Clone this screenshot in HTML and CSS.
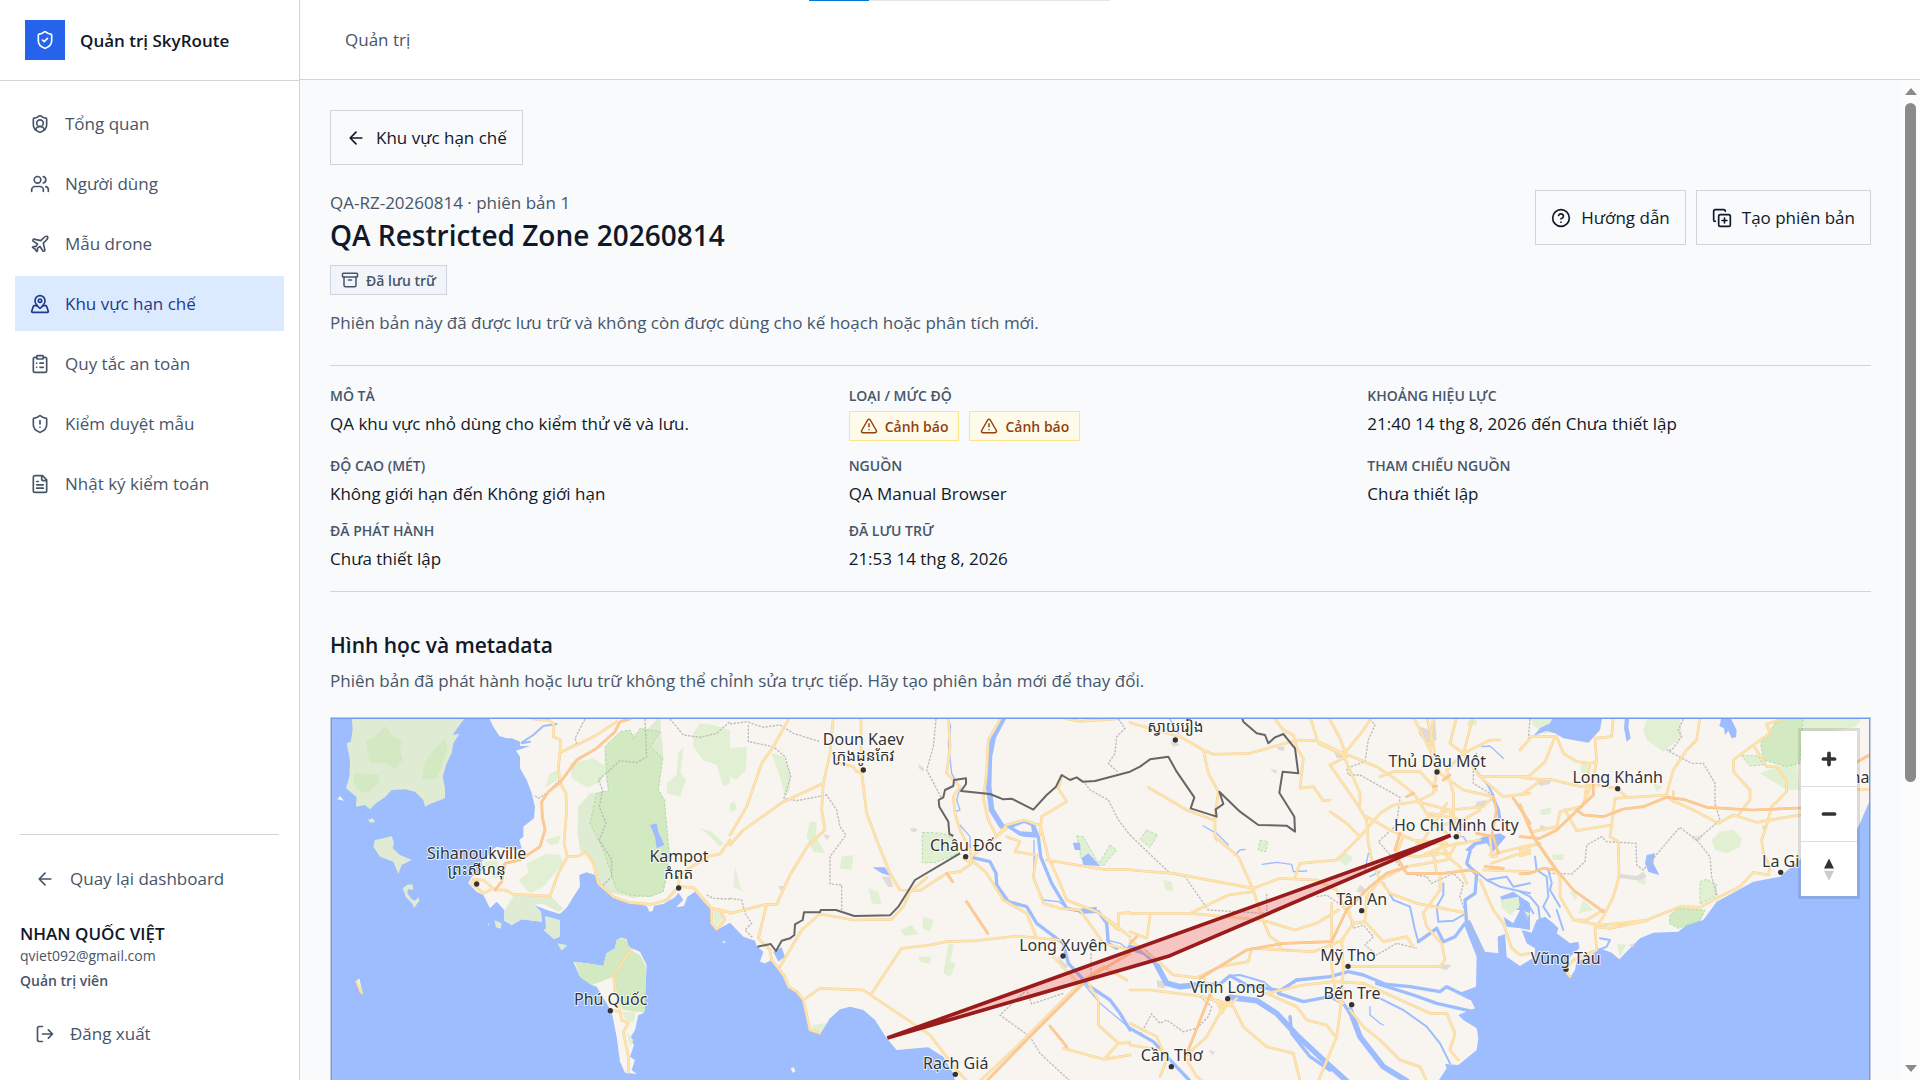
FILE: index.html
```html
<!DOCTYPE html>
<html lang="vi">
<head>
<meta charset="utf-8">
<meta name="viewport" content="width=device-width, initial-scale=1">
<title>Quản trị SkyRoute</title>
<link rel="stylesheet" href="styles.css">
</head>
<body>
<svg class="sprite" aria-hidden="true">
  <symbol id="i-shield" viewBox="0 0 24 24"><path d="M20 13c0 5-3.5 7.5-7.66 8.95a1 1 0 0 1-.67-.01C7.5 20.5 4 18 4 13V6a1 1 0 0 1 1-1c2 0 4.5-1.2 6.24-2.72a1.17 1.17 0 0 1 1.52 0C14.51 3.81 17 5 19 5a1 1 0 0 1 1 1z"/></symbol>
  <symbol id="i-back" viewBox="0 0 24 24"><path d="m12 19-7-7 7-7M19 12H5"/></symbol>
  <symbol id="i-warn" viewBox="0 0 24 24"><path d="m21.73 18-8-14a2 2 0 0 0-3.48 0l-8 14A2 2 0 0 0 4 21h16a2 2 0 0 0 1.73-3M12 9v4M12 17h.01"/></symbol>
</svg>
<div class="app">
  <div class="progress" aria-hidden="true"><div class="progress-fill"></div></div>
  <aside class="sidebar">
    <div class="brand">
      <span class="brand-mark"><svg class="icon" viewBox="0 0 24 24"><use href="#i-shield"/><path d="m9 12 2 2 4-4"/></svg></span>
      <span>Quản trị SkyRoute</span>
    </div>
    <nav class="nav">
      <a class="nav-item" href="#"><svg class="icon" viewBox="0 0 24 24"><use href="#i-shield"/><path d="M6.376 18.91a6 6 0 0 1 11.249.003"/><circle cx="12" cy="11" r="4"/></svg>Tổng quan</a>
      <a class="nav-item" href="#"><svg class="icon" viewBox="0 0 24 24"><path d="M16 21v-2a4 4 0 0 0-4-4H6a4 4 0 0 0-4 4v2M22 21v-2a4 4 0 0 0-3-3.87M16 3.13a4 4 0 0 1 0 7.75"/><circle cx="9" cy="7" r="4"/></svg>Người dùng</a>
      <a class="nav-item" href="#"><svg class="icon" viewBox="0 0 24 24"><path d="M17.8 19.2 16 11l3.5-3.5C21 6 21.5 4 21 3c-1-.5-3 0-4.5 1.5L13 8 4.8 6.2c-.5-.1-.9.1-1.1.5l-.3.5c-.2.5-.1 1 .3 1.3L9 12l-2 3H4l-1 1 3 2 2 3 1-1v-3l3-2 3.5 5.3c.3.4.8.5 1.3.3l.5-.2c.4-.3.6-.7.5-1.2z"/></svg>Mẫu drone</a>
      <a class="nav-item active" href="#" aria-current="page"><svg class="icon" viewBox="0 0 24 24"><path d="M18 8c0 3.613-3.869 7.429-5.393 8.795a1 1 0 0 1-1.214 0C9.87 15.429 6 11.613 6 8a6 6 0 0 1 12 0"/><circle cx="12" cy="8" r="2"/><path d="M8.714 14h-3.71a1 1 0 0 0-.948.683l-2.004 6A1 1 0 0 0 3 22h18a1 1 0 0 0 .948-1.316l-2-6a1 1 0 0 0-.949-.684h-3.712"/></svg>Khu vực hạn chế</a>
      <a class="nav-item" href="#"><svg class="icon" viewBox="0 0 24 24"><rect width="8" height="4" x="8" y="2" rx="1"/><path d="M16 4h2a2 2 0 0 1 2 2v14a2 2 0 0 1-2 2H6a2 2 0 0 1-2-2V6a2 2 0 0 1 2-2h2M12 11h4M12 16h4M8 11h.01M8 16h.01"/></svg>Quy tắc an toàn</a>
      <a class="nav-item" href="#"><svg class="icon" viewBox="0 0 24 24"><use href="#i-shield"/><path d="M12 8v4M12 16h.01"/></svg>Kiểm duyệt mẫu</a>
      <a class="nav-item" href="#"><svg class="icon" viewBox="0 0 24 24"><path d="M15 2H6a2 2 0 0 0-2 2v16a2 2 0 0 0 2 2h12a2 2 0 0 0 2-2V7ZM14 2v4a2 2 0 0 0 2 2h4M10 9H8M16 13H8M16 17H8"/></svg>Nhật ký kiểm toán</a>
    </nav>
    <div class="account">
      <a class="account-action" href="#"><svg class="icon"><use href="#i-back"/></svg>Quay lại dashboard</a>
      <div class="user">
        <div class="user-name">NHAN QUỐC VIỆT</div>
        <div class="user-mail">qviet092@gmail.com</div>
        <div class="user-role">Quản trị viên</div>
      </div>
      <button class="account-action" type="button"><svg class="icon" viewBox="0 0 24 24"><path d="M9 21H5a2 2 0 0 1-2-2V5a2 2 0 0 1 2-2h4M16 17l5-5-5-5M21 12H9"/></svg>Đăng xuất</button>
    </div>
  </aside>

  <div class="workspace">
    <header class="topbar">Quản trị</header>
    <div class="scroller">
      <main class="content">
        <a class="btn" href="#"><svg class="icon"><use href="#i-back"/></svg>Khu vực hạn chế</a>
        <div class="page-head">
          <div>
            <p class="muted">QA-RZ-20260814 · phiên bản 1</p>
            <h1>QA Restricted Zone 20260814</h1>
            <span class="badge"><svg class="icon" viewBox="0 0 24 24"><rect width="20" height="5" x="2" y="3" rx="1"/><path d="M4 8v11a2 2 0 0 0 2 2h12a2 2 0 0 0 2-2V8M10 12h4"/></svg>Đã lưu trữ</span>
            <p class="muted note">Phiên bản này đã được lưu trữ và không còn được dùng cho kế hoạch hoặc phân tích mới.</p>
          </div>
          <div class="actions">
            <button class="btn" type="button"><svg class="icon" viewBox="0 0 24 24"><circle cx="12" cy="12" r="10"/><path d="M9.09 9a3 3 0 0 1 5.83 1c0 2-3 3-3 3M12 17h.01"/></svg>Hướng dẫn</button>
            <button class="btn" type="button"><svg class="icon" viewBox="0 0 24 24"><path d="M15 12v6M12 15h6"/><rect width="14" height="14" x="8" y="8" rx="2"/><path d="M4 16c-1.1 0-2-.9-2-2V4c0-1.1.9-2 2-2h10c1.1 0 2 .9 2 2"/></svg>Tạo phiên bản</button>
          </div>
        </div>

        <dl class="details">
          <div><dt>MÔ TẢ</dt><dd>QA khu vực nhỏ dùng cho kiểm thử vẽ và lưu.</dd></div>
          <div><dt>LOẠI / MỨC ĐỘ</dt><dd class="badges"><span class="badge warn"><svg class="icon"><use href="#i-warn"/></svg>Cảnh báo</span><span class="badge warn"><svg class="icon"><use href="#i-warn"/></svg>Cảnh báo</span></dd></div>
          <div><dt>KHOẢNG HIỆU LỰC</dt><dd>21:40 14 thg 8, 2026 đến Chưa thiết lập</dd></div>
          <div><dt>ĐỘ CAO (MÉT)</dt><dd>Không giới hạn đến Không giới hạn</dd></div>
          <div><dt>NGUỒN</dt><dd>QA Manual Browser</dd></div>
          <div><dt>THAM CHIẾU NGUỒN</dt><dd>Chưa thiết lập</dd></div>
          <div><dt>ĐÃ PHÁT HÀNH</dt><dd>Chưa thiết lập</dd></div>
          <div><dt>ĐÃ LƯU TRỮ</dt><dd>21:53 14 thg 8, 2026</dd></div>
        </dl>

        <section class="geometry">
          <h2>Hình học và metadata</h2>
          <p class="muted">Phiên bản đã phát hành hoặc lưu trữ không thể chỉnh sửa trực tiếp. Hãy tạo phiên bản mới để thay đổi.</p>
          <div class="map">
            <svg class="map-canvas" viewBox="3 24 4617 1800" preserveAspectRatio="xMidYMin slice" role="img" aria-label="Bản đồ khu vực hạn chế">
              <defs>
                <g id="roads">
                  <path d="M610 27 660 32 672 45 670 80 692 90 690 125 685 170 690 218 708 250 710 300 702 400 712 440 685 490 660 558 550 553 525 540 495 540 460 510 430 508 425 520 460 550 480 540M712 440 745 438 768 425 790 460 805 520 850 560 900 578 965 583 1010 570 1045 530 1090 532 1145 595 1200 607M1145 595 1145 640 1160 658 1185 630 1170 598M1200 390 1170 432 1140 438 1050 490 1045 530M695 125 750 100 800 75 860 35M905 720 885 745 850 800 860 850 875 930 895 940 880 965 895 1040 895 1088M840 900 870 905M80 815 95 848"/>
                  <g transform="translate(1200)">
                    <path d="M180 20 130 110 95 160 50 290 0 375M310 20 300 130 280 220 275 300 285 360 235 405 180 495 140 583 110 583 0 610M280 220 160 275 40 360 0 405M393 20 393 170 410 310 440 390 480 490 510 540 570 542 650 490 690 485 725 460 700 445M330 160 370 170 380 185 393 187M110 583 85 685 120 720 125 750 165 800 175 830 200 845 220 870 240 960 270 970M220 870 270 835 400 840 600 975 680 1080 710 1113M150 770 215 660 270 612 370 630 485 628 520 590 540 545 590 503M425 850 515 715 600 705 650 695 740 692 860 678 990 690M655 20 660 110 650 190 690 230 670 260 675 310 690 360 720 420 725 450 770 490 820 570 890 610 920 685M815 20 775 90 770 190 760 265 775 330 800 380 830 345 885 330 915 342 930 345 955 440 990 520 1010 570 1100 605 1150 640 1200 680M725 440 830 355M1010 275 935 320 930 375M995 200 985 235 1010 275M950 450 1120 478 1200 478M830 380 870 395 855 425 920 435 910 500 940 580 990 595 1050 600 1120 700 1200 720M970 740 1040 815M1075 820 1105 870 1105 945 1165 1000 1125 1045M1000 1015 1120 1048 1200 1035M750 1113 860 1010 1060 810 1120 770 1190 810M1165 610 1165 660 1120 620M1165 610 1200 608M1165 1000 1200 998M1010 27 1050 34 1160 27"/>
                  </g>
                  <g transform="translate(2400)">
                    <path d="M0 38 150 80 220 120 250 133 360 130 500 90 560 92 640 130 740 170 800 210 850 250 890 310 950 370M220 120 235 190 265 245 255 320 255 380 325 440 370 540 395 620 420 680 450 700 450 720M55 232 170 300 250 330M430 20 460 60 490 75 500 115 520 145 510 235 550 230 580 272 600 270M540 20 565 100 640 135 700 60 720 30M600 30 630 85 650 140 600 165 680 280 710 330 715 400 725 450 750 510M640 135 690 250 690 285M600 305 650 340 690 380 750 310 790 285 860 275 910 250 920 180 910 100 890 20M690 380 620 450 510 460 495 500M0 480 130 490 370 535 450 505 560 510 620 540 640 590 660 610M0 610 180 610 295 555 370 545M180 610 395 630 495 660 560 640 625 600M650 600 670 640 705 635 710 560 750 510 830 470 950 450 980 400M670 640 635 690 640 770 635 870 620 980 565 1113M605 580 605 770 620 870 640 880M705 635 760 695 830 680 850 710M750 510 780 550 860 580 1000 607M0 665 50 685 60 620M0 690 90 760 130 795 200 803 270 770 355 755 365 715 550 725 640 690M0 840 60 840 220 860 310 890 340 950 410 1010 490 1030 510 1113M220 800 250 870 280 890 230 980 165 1040 200 1100 220 1113M0 940 80 980 110 1050 90 1100M0 1005 90 1020M300 870 275 910 260 870 300 885 320 865M410 850 500 890 530 930 590 945 620 985M410 850 520 825 610 815 700 820 900 910 950 910 975 970 960 1020 985 1050M660 770 750 770 930 770 945 750 935 700 890 650 880 610 930 540 930 500M660 900 700 950 750 990 810 1050 870 1070 890 1113M710 320 780 360 850 390 950 400M750 200 790 185 870 185 920 240M980 20 960 100 1000 130 1050 200 1120 260 1200 250M1050 200 1200 200M1030 20 1000 130 950 180 970 250 970 320 990 380M1000 130 1080 90 1110 90M910 20 900 120 930 190 1000 240 1090 260M850 20 880 80 905 130M860 275 960 300 1060 290 1090 260M880 330 960 300 970 350M860 420 920 330 950 280M870 440 940 410 1050 390M920 490 910 430 950 400M800 430 860 440 940 430 990 470 1010 520M820 380 800 430 860 440M860 400 930 400 960 440M900 310 1000 330 1050 300M910 350 960 340 1010 350M1050 510 1090 600 1120 640 1145 715 1170 735 1200 730M1060 480 1200 485M1080 435 1200 405M1085 460 1200 420M1080 380 1085 440 1100 440"/>
                  </g>
                  <g transform="translate(3570)">
                    <path d="M0 120 35 80 110 80 130 130 170 155 210 160 230 155 225 85 275 80 280 20M105 80 75 155 20 205 0 200M20 205 100 210 180 230 215 225 230 155M0 255 60 215M215 225 185 290 120 305 110 350 40 365M135 300 170 362 275 345 285 265 440 255 455 270 530 305 595 340 640 315 710 337 840 315M230 225 290 235 320 260M440 250 460 180 500 120 530 90 540 20M275 345 270 380 295 395 297 500 280 560 250 620 225 655 230 720 160 750 135 780 150 800M460 245 460 275M780 30 740 42 750 70 700 105 640 150 640 185 690 240 690 270 655 315M700 105 740 170 770 170 800 210 800 245 755 290 740 345 725 390 730 430 750 470 745 495 700 487 660 530 600 560 540 592 480 590 380 630 300 640 240 645 160 630 120 560 120 500 40 380 0 285M160 630 200 630 250 600M225 650 270 655 380 632M0 420 40 405 60 400M0 438 30 430M1013 238 1048 238M210 160 195 260"/>
                  </g>
                </g>
                <g id="trunks">
                  <path d="M900 27 870 35 855 65 800 115 740 150 690 218 655 245 635 275 637 320 645 360 630 410 570 450 525 460 515 515 495 540"/>
                  <path transform="translate(1200)" d="M650 490 668 515M710 575 773 670M960 948 1010 1010M770 1113 900 980 1080 800 1200 730"/>
                  <path transform="translate(2400)" d="M0 700 20 680M210 805 350 720 460 700 605 695 650 600 720 530 770 490 830 470M175 1020 240 855M795 420 810 370M800 440 830 490 940 490 1020 480 1045 490M1040 370 1090 380 1105 430M1090 260 1100 300 1085 380M1150 265 1200 340M830 260 850 250M910 230 920 228M940 210 960 195M1065 470 1120 475"/>
                  <path transform="translate(3570)" d="M0 380 60 385 110 360 220 255 220 225M170 300 190 315 250 320 310 297 370 290 440 262 490 268 560 292 700 300 840 294M1013 155 1048 135M0 285 40 380 110 480 160 540 250 605M0 492 30 490 70 475 110 480"/>
                </g>
              </defs>
              <rect class="water" x="-3000" y="0" width="11000" height="2000"/>
              <path class="forest" d="M65 20 68 60 62 95 50 100 60 150 58 200 48 235 80 262 78 290 105 285 120 298 140 278 165 262 185 240 225 238 255 245 280 270 285 290 300 282 345 265 345 235 338 200 350 160 365 130 370 100 388 72 368 74 385 50 408 20Z"/>
              <path class="wood" d="M165 48 188 78 215 92 210 120 218 150 195 175 165 160 120 160 108 95 140 75ZM345 85 352 110 335 170 320 205 275 210 285 155 315 115ZM75 190 150 195 145 220 110 250 85 240 70 215Z"/>
              <path class="land" d="M475 20 490 50 508 78 530 85 545 85 570 95 570 108 600 108 558 122 570 140 570 175 590 210 605 250 615 290 612 325 580 350 580 380 568 390 575 415 560 420 500 410 490 418 455 455 460 480 425 500 415 520 440 545 460 555 480 595 500 575 523 600 523 632 545 645 575 628 635 635 633 605 612 585 650 600 690 612 712 590 730 560 750 530 748 495 770 487 795 495 805 525 830 545 870 572 950 588 958 605 968 603 972 587 1000 582 1035 562 1045 548 1060 570 1038 592 1062 588 1072 560 1095 545 1125 580 1145 600 1145 640 1160 660 1200 638 1240 680 1275 692 1280 708 1300 725 1290 755 1305 760 1325 750 1350 780 1370 825 1400 845 1420 870 1430 920 1440 955 1470 972 1500 925 1530 898 1560 890 1600 900 1635 930 1670 985 1700 1020 1795 1012 1840 1040 1870 1090 1880 1140 1880 1900 3325 1900 3325 1113 3350 1075 3345 1062 3385 1065 3410 1045 3440 1020 3445 985 3440 955 3400 930 3385 915 3435 895 3420 865 3385 850 3438 830 3440 740 3400 640 3420 630 3465 725 3505 730 3503 680 3525 672 3530 740 3570 768 3615 740 3615 715 3590 700 3575 660 3605 668 3620 630 3645 620 3670 640 3685 655 3680 670 3720 700 3745 695 3748 715 3720 740 3705 780 3720 803 3735 780 3740 755 3785 735 3810 715 3845 728 3868 748 3900 715 3930 685 3970 668 4045 665 4070 645 4120 630 4160 575 4210 548 4270 515 4350 500 4362 490 4420 440 4520 420 4583 355 4618 275 4640 20Z"/>
              <path class="land" d="M860 690 875 683 890 688 895 710 930 725 950 765 945 860 940 910 925 915 915 960 900 985 912 1005 900 1040 915 1050 905 1080 920 1092 885 1088 870 1055 860 980 845 905 800 830 785 825 750 800 730 755 770 760 820 768 830 730 855 715ZM22 268 30 258 42 272ZM78 815 88 805 98 850 90 848ZM1175 696 1186 692 1184 700ZM1382 1075 1392 1072 1396 1085 1388 1088Z"/>
              <path class="forest" d="M135 390 160 385 185 378 192 398 188 415 210 435 245 450 215 465 205 492 190 455 150 440 130 410ZM218 535 232 524 248 523 250 540 234 538 232 550 245 568 255 572 266 562 268 572 252 594 246 580 228 562ZM114 330 128 325 136 335 122 339ZM493 630 515 640 512 656 498 652ZM645 618 690 630 690 680 672 688 640 660 648 655ZM682 700 712 706 695 722ZM472 640 478 642 476 648ZM550 558 665 560 700 597 685 605 640 582 612 583 633 605 635 635 575 628 545 645 523 632 525 600ZM780 250 835 242 822 180 825 120 850 90 950 60 990 20 1000 140 985 240 1005 270 1020 480 1000 545 915 565 830 545 805 520 785 450 750 420 742 370 745 290Z"/>
              <path class="wood park" d="M825 110 870 65 900 60 912 88 930 55 990 65 962 110 998 145 985 240 1003 270 1018 430 1000 545 960 560 900 555 860 540 820 420 780 340 800 250 835 242 830 180Z"/>
              <path class="wood" d="M860 690 885 685 905 722 930 735 948 770 945 905 920 905 880 900 850 850 850 800 800 820 785 825 750 800 735 757 770 760 820 768 830 730 855 715Z"/>
              <path class="leaf" d="M720 160 790 145 828 170 815 215 770 232 725 205ZM660 190 690 178 680 210 645 235ZM590 460 650 432 690 435 700 460 640 530 600 550 565 510 595 490ZM460 455 500 450 510 500 490 505ZM645 390 692 375 685 400 660 405ZM1060 110 1052 190 1068 210 1050 260 1012 250 1010 220 1040 195 1045 130ZM1090 70 1110 40 1150 45 1200 60 1200 220 1180 230 1160 165 1120 150 1090 110ZM1110 355 1145 365 1180 400 1170 410 1130 370ZM875 905 918 905 912 935 890 935ZM890 965 910 990 900 1010ZM1165 598 1180 610 1172 635 1152 652 1150 605Z"/>
              <g transform="translate(1200)">
                <path class="leaf" d="M0 115 50 110 48 180 20 210 0 200ZM125 130 160 140 182 190 180 240 165 260 150 200ZM240 335 260 335 258 380 285 430 250 425 230 380ZM335 440 370 435 365 480 330 475ZM415 535 445 545 455 585 425 580ZM580 622 612 630 598 665 578 655ZM510 660 545 645 565 672 525 678ZM655 700 672 705 660 755 678 760 660 800 640 790ZM565 740 605 740 600 762 570 755ZM0 280 15 275 20 300 0 305ZM245 945 292 938 270 965 250 960ZM15 470 30 530 40 545 10 530Z"/>
                <path class="leaf park" d="M577 367 640 370 670 385 690 428 615 458 577 458ZM1040 378 1060 380 1110 468 1055 450ZM1140 405 1160 420 1120 468 1108 458Z"/>
                <path class="water" d="M1028 398 1050 398 1052 420 1035 420ZM1055 445 1075 430 1110 468 1060 465ZM428 472 465 472 480 497 455 490ZM130 725 155 712 165 740 145 755ZM1040 598 1100 590 1100 608 1050 612ZM820 345 870 330 912 342 925 380 870 378Z"/>
                <path class="land" d="M850 352 882 339 903 347 906 366 870 364Z"/>
                <path class="urban" d="M565 162 582 175 580 185 567 175ZM540 355 562 355 558 365 545 365ZM455 500 480 500 490 530 475 532ZM145 528 165 528 152 542ZM980 735 1015 770 1000 778ZM280 372 300 378 290 390Z"/>
              </g>
              <g transform="translate(2400)">
                <path class="leaf park" d="M50 360 83 375 60 412 30 388ZM390 390 413 395 408 425 384 420Z"/>
                <path class="leaf" d="M648 428 670 445 648 468 622 448ZM100 510 125 515 130 545 105 538ZM1015 30 1040 30 1040 45 1010 48Z"/>
                <path class="urban" d="M870 50 900 60 915 27 920 90 890 100 865 70ZM612 125 640 122 650 140 620 145ZM1040 275 1070 270 1065 290 1035 290ZM690 525 705 535 700 550 680 545ZM930 762 965 765 950 780 930 775ZM80 810 105 815 105 835 82 832ZM440 110 465 110 460 122 445 120ZM120 95 140 100 150 105 130 110ZM235 1020 255 1025 248 1036ZM420 178 440 180 438 192ZM250 380 265 385 260 398Z"/>
                <path class="water" d="M1060 380 1110 370 1128 380 1090 425 1070 400 1040 405 1020 425 1005 420 1040 390ZM1110 560 1150 545 1200 580 1200 660 1170 655 1130 650 1120 620 1150 640 1170 600 1130 600Z"/>
                <path class="leaf" d="M1112 570 1165 560 1170 590 1140 615 1115 595ZM1175 600 1200 610 1190 630Z"/>
              </g>
              <g transform="translate(3570)">
                <path class="leaf" d="M30 20 130 20 128 65 70 70 40 45ZM370 60 385 20 480 20 485 80 430 125 380 90ZM575 390 600 365 640 360 665 385 660 410 620 430 585 420ZM175 610 190 570 220 600ZM60 300 95 292 90 312 65 315ZM95 435 130 432 130 450 100 450ZM150 545 175 550 165 572ZM515 378 548 375 545 390 520 392ZM400 220 428 230 410 245ZM180 165 200 160 205 185 185 190ZM290 700 318 705 300 740ZM850 20 1030 20 1008 50 850 80ZM720 190 770 170 830 165 840 240 800 240ZM350 515 380 505 375 525Z"/>
                <path class="wood park" d="M780 20 850 20 840 160 800 170 730 150 722 100ZM475 595 555 600 540 632 475 655 448 640 450 615Z"/>
                <path class="leaf park" d="M665 137 715 137 730 165 690 168ZM540 515 560 508 590 525 585 560 540 582Z"/>
                <path class="urban" d="M50 210 95 203 90 222 60 228ZM300 492 350 498 370 485 380 500 360 512 290 502ZM725 345 740 350 732 365ZM60 345 80 350 60 358ZM325 705 345 700 340 712Z"/>
                <path class="water" d="M100 20 247 20 240 60 205 98 130 85 105 70 80 62 40 78 60 55 90 40ZM315 20 328 20 325 50 332 85 320 95 312 55ZM605 20 630 20 650 60 648 82 635 85 625 62 615 75 612 55 598 48Z"/>
                <path class="water" d="M380 435 405 430 400 460 418 495 398 490 385 485 375 460Z"/>
              </g>
              <path class="water" d="M960 345 980 340 985 365 1003 405 980 415 975 380Z"/>
              <path class="river w6" d="M575 98 610 75 640 48 680 42M575 100 600 95"/>
              <g class="river" transform="translate(1200)">
                <path class="w18" d="M822 20 790 80 778 140 776 230 785 300 815 348"/>
                <path class="w10" d="M912 350 925 380 932 440 965 520 1010 595 1060 605 1105 605 1130 640 1135 700 1160 715M725 442 780 455 798 490 800 525 835 575 890 590 920 640 1000 700 1015 760 1080 830"/>
                <path class="w10" d="M1080 830 1140 870 1170 910 1200 960M880 375 920 378"/>
                <path class="w4" d="M655 27 662 50 655 100 665 190 690 235 680 270 690 300 675 305M690 345 720 380 722 440M912 390 912 510 940 570 985 575 1010 590M1060 820 1110 880 1200 955M1130 690 1170 700 1190 715"/>
              </g>
              <g class="river" transform="translate(2400)">
                <path class="w18" d="M300 862 380 872 440 910 500 975 580 1050 650 1113M0 712 45 728 75 755 110 820 150 830 200 825M660 900 690 980 760 1070 830 1113"/>
                <path class="w10" d="M740 820 850 855 920 880 1030 905M500 810 600 800 655 785 700 795 760 820"/>
                <path class="w10" d="M200 825 270 822 300 797 350 825 450 842 500 810M445 850 520 875 600 860 640 880 660 910M480 920 485 970 540 1040 600 1080M0 955 70 995 130 1060 180 1113M740 820 840 830 930 845 950 830 1020 865M1085 255 1105 300 1110 330M1005 640 975 680 940 695 920 655 900 670 865 695M1020 425 1010 460 1040 495 1035 550 1005 570 1010 645"/>
                <path class="w6" d="M1020 470 1070 510 1130 500M865 695 855 660 840 590 790 570 760 520M940 520 940 555 920 590 925 635 970 632 1000 615M300 797 330 795 400 815 430 840M750 865 820 900 890 950 930 1000 960 1060M1040 185 1070 220 1090 255M1130 500 1150 530 1200 520M1070 510 1110 530 1200 550"/>
                <path class="w4" d="M720 890 720 915 750 940 760 945M220 348 260 370 295 405M315 435 330 420 345 418M397 463 440 457 485 463 490 485 530 483M705 480 715 430M720 500 750 485M970 380 1000 380 1010 395M1055 110 1080 108 1120 145M1040 130 1030 160 1045 190M120 27 135 60 145 70"/>
              </g>
              <g class="river w6" transform="translate(3570)">
                <path d="M0 545 30 560 55 590 60 630M45 440 50 480 80 500 85 560 70 590 90 620M85 480 95 520 90 540 120 590M110 600 130 660M240 685 270 690 260 710 235 720M0 590 20 620 10 650M20 575 40 610"/>
              </g>
              <path class="region" d="M765 27 735 85 740 100 690 130 685 215 650 250 625 265 612 255M945 27 950 140 920 158 870 152 805 210 818 240 808 290 828 340 808 390 845 450 845 500 815 530M1020 27 1060 75 1110 82 1160 70 1200 35M1130 555 1150 565 1200 567"/>
              <path class="region" transform="translate(1200)" d="M0 42 50 35 100 52 150 45 190 70 270 95M55 45 55 95 130 110 165 140 182 200 162 265 200 272 290 255 320 300 330 350 348 375 300 440 300 522 335 525 335 600M0 565 35 570 45 610 65 640 45 660 70 685M618 27 610 110 590 180 635 265M1165 27 1185 55 1160 80 1155 130 1135 160 1162 185M1065 220 1080 240 1135 270 1165 330 1200 375M1000 850 905 882 890 840 810 915 900 980 930 1030 1020 1113M1083 730 1083 790"/>
              <path class="region" transform="translate(2400)" d="M0 375 120 490 165 500 235 600 410 610 410 550M720 27 735 45 715 90 705 155 650 175 655 195 690 195 810 262 800 345 745 395 830 490 890 500 905 520 970 490 1000 520 990 560 1020 650 1060 735M560 560 590 555 640 590 660 620 670 655 700 645 730 680 705 705 740 735 800 700 860 715M210 860 245 890 235 920 200 955 160 965 110 930 90 940 65 912 30 975M1030 160 1030 220 1080 250"/>
              <path class="region" transform="translate(3570)" d="M30 27 25 90 0 120M490 27 475 60 485 80 455 120 440 120 515 160 550 160 585 220 585 280 600 330 530 390 480 352 455 380 370 480 350 465 348 400 260 395 245 380 200 405 195 455 155 492 90 490M530 390 570 440 575 500 595 570"/>
              <use class="road-case" href="#roads"/>
              <use class="road-fill" href="#roads"/>
              <use class="trunk-case" href="#trunks"/>
              <use class="trunk-fill" href="#trunks"/>
              <path class="border" d="M1282 710 1322 702 1338 723 1355 692 1380 685 1393 675 1395 643 1418 630 1422 607 1470 607 1472 600 1518 600 1573 618 1680 616 1705 590 1755 510 1890 430M1870 378 1858 372 1855 335 1828 290 1826 270 1840 262 1845 240 1870 228 1872 210 1908 205 1908 222 1893 243 1980 252 2020 268 2045 266 2110 299 2150 255 2178 230 2195 195 2220 210 2240 202 2258 215 2295 213 2400 185 2430 170 2460 148 2515 140 2540 185 2593 262 2582 295 2660 320 2657 298 2680 282 2668 245 2730 305 2785 345 2870 347 2895 365 2893 320 2848 248 2858 185 2905 190 2895 115 2860 72 2835 82 2815 100 2805 75 2780 70 2740 35 2735 20"/>
              <path class="zone" d="M1672 984 3362 376 2520 737Z"/>
              <g class="dots">
                <circle cx="440" cy="522" r="8"/><circle cx="1046" cy="534" r="8"/><circle cx="841" cy="902" r="8"/><circle cx="1600" cy="180" r="8"/><circle cx="1907" cy="440" r="8"/><circle cx="2199" cy="738" r="8"/><circle cx="1876" cy="1093" r="8"/><circle cx="2536" cy="90" r="8"/><circle cx="3321" cy="186" r="8"/><circle cx="3379" cy="380" r="8"/><circle cx="3095" cy="602" r="8"/><circle cx="3054" cy="769" r="8"/><circle cx="2693" cy="866" r="8"/><circle cx="3065" cy="884" r="8"/><circle cx="2524" cy="1070" r="8"/><circle cx="3863" cy="236" r="8"/><circle cx="4352" cy="487" r="8"/><circle cx="3708" cy="778" r="8"/>
              </g>
              <g class="places">
                <text x="440" y="446">Sihanoukville</text><text class="khmer" x="440" y="496">ព្រះសីហនុ</text>
                <text x="1047" y="457">Kampot</text><text class="khmer" x="1046" y="508">កំពត</text>
                <text x="842" y="885">Phú Quốc</text>
                <text x="1600" y="104">Doun Kaev</text><text class="khmer" x="1600" y="154">ក្រុងដូនកែវ</text>
                <text x="1908" y="424">Châu Đốc</text>
                <text x="2200" y="722">Long Xuyên</text>
                <text x="1877" y="1076">Rạch Giá</text>
                <text class="khmer" x="2536" y="66">ស្វាយរៀង</text>
                <text x="3322" y="170">Thủ Dầu Một</text>
                <text x="3379" y="364">Ho Chi Minh City</text>
                <text x="3095" y="585">Tân An</text>
                <text x="3054" y="752">Mỹ Tho</text>
                <text x="2693" y="850">Vĩnh Long</text>
                <text x="3066" y="867">Bến Tre</text>
                <text x="2525" y="1053">Cần Thơ</text>
                <text x="3863" y="219">Long Khánh</text>
                <text x="4352" y="471">La Gi</text>
                <text x="3707" y="762">Vũng Tàu</text>
                <text x="4590" y="219">na</text>
              </g>
            </svg>
            <div class="map-controls">
              <button type="button" aria-label="Phóng to"><svg viewBox="0 0 29 29"><path d="M14.5 8.5c-.75 0-1.5.75-1.5 1.5v3h-3c-.75 0-1.5.75-1.5 1.5S9.25 16 10 16h3v3c0 .75.75 1.5 1.5 1.5S16 19.75 16 19v-3h3c.75 0 1.5-.75 1.5-1.5S19.75 13 19 13h-3v-3c0-.75-.75-1.5-1.5-1.5"/></svg></button>
              <button type="button" aria-label="Thu nhỏ"><svg viewBox="0 0 29 29"><path d="M10 13c-.75 0-1.5.75-1.5 1.5S9.25 16 10 16h9c.75 0 1.5-.75 1.5-1.5S19.75 13 19 13z"/></svg></button>
              <button type="button" aria-label="Hướng bắc"><svg viewBox="0 0 29 29"><path d="m10.5 14 4-8 4 8z"/><path class="south" d="m10.5 16 4 8 4-8z"/></svg></button>
            </div>
          </div>
        </section>
      </main>
      <div class="scrollbar" aria-hidden="true"><span class="arrow-up"></span><span class="thumb"></span><span class="arrow-down"></span></div>
    </div>
  </div>
</div>
</body>
</html>
```
FILE: styles.css
```css
* { box-sizing: border-box; }

body {
  margin: 0;
  font: 17px/25px "Open Sans", "Noto Sans", sans-serif;
  color: #111827;
  background: #fff;
}

h1, h2, p, dl, dd { margin: 0; }
a { color: inherit; text-decoration: none; }
button { font: inherit; color: inherit; background: none; border: 0; padding: 0; cursor: pointer; }

.sprite { position: absolute; width: 0; height: 0; }

.icon {
  width: 20px;
  height: 20px;
  flex: none;
  fill: none;
  stroke: currentColor;
  stroke-width: 2;
  stroke-linecap: round;
  stroke-linejoin: round;
}

.app { display: flex; height: 100vh; overflow: hidden; }

.progress {
  position: absolute;
  top: 0;
  left: 50%;
  width: 301px;
  height: 1px;
  margin-left: -151px;
  background: #e5e5e5;
}
.progress-fill { width: 20%; height: 100%; background: #0078d4; }

/* Sidebar */
.sidebar {
  display: flex;
  flex-direction: column;
  width: 300px;
  flex: none;
  border-right: 1px solid #d1d5db;
}
.brand {
  display: flex;
  align-items: center;
  gap: 15px;
  height: 81px;
  padding: 0 25px;
  border-bottom: 1px solid #d1d5db;
  font-weight: 600;
}
.brand-mark {
  display: grid;
  place-items: center;
  width: 40px;
  height: 40px;
  background: #2563eb;
  color: #fff;
}
.nav { display: flex; flex-direction: column; gap: 5px; padding: 15px; }
.nav-item {
  display: flex;
  align-items: center;
  gap: 15px;
  height: 55px;
  padding: 0 15px;
  font-weight: 500;
  color: #475569;
}
.nav-item.active { background: #dbeafe; color: #1e3a8a; }

.account {
  margin: auto 20px 19px;
  padding-top: 16px;
  border-top: 1px solid #d1d5db;
}
.account-action {
  display: flex;
  align-items: center;
  gap: 15px;
  width: 100%;
  height: 55px;
  padding: 0 15px;
  font-weight: 500;
  color: #475569;
}
.user { padding: 15px 0; }
.user-name { font-weight: 600; }
.user-mail { font-size: 14px; line-height: 20px; color: #475569; }
.user-role { margin-top: 5px; font-size: 14px; line-height: 20px; font-weight: 600; color: #475569; }

/* Workspace */
.workspace { display: flex; flex-direction: column; flex: 1; min-width: 0; }
.topbar {
  display: flex;
  align-items: center;
  height: 80px;
  flex: none;
  padding: 0 45px;
  border-bottom: 1px solid #d1d5db;
  font-weight: 500;
  color: #475569;
}
.scroller { display: flex; flex: 1; min-height: 0; overflow: hidden; background: #f8fafc; }
.content { flex: 1; min-width: 0; padding: 30px; }

.scrollbar {
  display: flex;
  flex-direction: column;
  align-items: center;
  width: 19px;
  padding: 8px 0;
  background: #fcfcfc;
}
.arrow-up, .arrow-down { border: 6px solid transparent; }
.arrow-up { border-top: 0; border-bottom: 7px solid #8a8a8a; }
.arrow-down { margin-top: auto; border-bottom: 0; border-top: 7px solid #8a8a8a; }
.thumb { width: 11px; height: 69%; margin-top: 8px; border-radius: 6px; background: #8a8a8a; }

.btn {
  display: inline-flex;
  align-items: center;
  gap: 10px;
  height: 55px;
  padding: 0 15px;
  border: 1px solid #d1d5db;
  font-weight: 500;
  white-space: nowrap;
}
.muted { color: #475569; }

.page-head { display: flex; justify-content: space-between; gap: 30px; padding: 25px 0 30px; }
.content > .btn { vertical-align: top; }
.actions { display: flex; align-items: flex-start; gap: 10px; }
h1 { font-size: 28px; line-height: 40px; font-weight: 600; }
h2 { font-size: 21px; line-height: 35px; font-weight: 600; }

.badge {
  display: inline-flex;
  align-items: center;
  gap: 7px;
  height: 30px;
  padding: 0 10px;
  border: 1px solid #cbd5e1;
  background: #f1f5f9;
  font-size: 14px;
  font-weight: 600;
  color: #475569;
}
.badge .icon { width: 18px; height: 18px; }
.page-head .badge { margin-top: 10px; vertical-align: top; }
.note { margin-top: 15px; }
.badge.warn { border-color: #fde68a; background: #fffbeb; color: #92400e; }
.badges { display: flex; gap: 10px; }

.details {
  display: grid;
  grid-template-columns: repeat(3, 1fr);
  gap: 15px;
  padding: 20px 0;
  border-top: 1px solid #d1d5db;
  border-bottom: 1px solid #d1d5db;
}
.details dt { font-size: 14px; line-height: 20px; font-weight: 600; color: #475569; }
.details dd { margin-top: 5px; }

.geometry { padding-top: 36px; }
.geometry .muted { margin-top: 5px; }

/* Map */
.map {
  position: relative;
  height: 600px;
  margin-top: 24px;
  border: 1px solid #c3cbdb;
  outline: 1px solid #6f9cf0;
  outline-offset: -2px;
  overflow: hidden;
}
.map-canvas { display: block; width: 100%; height: 100%; }
.water { fill: #9ebdff; }
.land { fill: #f8f4f0; }
.forest { fill: #e0ebd3; }
.wood { fill: #d3e9c1; }
.leaf { fill: #e1efd3; }
.urban { fill: #dedbd8; }
.park { stroke: #8fd88f; stroke-width: 2; stroke-dasharray: 8 5; }
.river { fill: none; stroke: #9ebdff; stroke-linejoin: round; stroke-linecap: round; }
.w4 { stroke-width: 4; }
.w6 { stroke-width: 6; }
.w10 { stroke-width: 10; }
.w18 { stroke-width: 17; }
.region { fill: none; stroke: #bdbbbb; stroke-width: 4; stroke-dasharray: 7 4; }
.border { fill: none; stroke: #666; stroke-width: 6; stroke-linejoin: round; }
.road-case, .road-fill, .trunk-case, .trunk-fill { fill: none; stroke-linejoin: round; stroke-linecap: round; }
.road-case { stroke: #f3d0a2; stroke-width: 8; }
.road-fill { stroke: #ffe6a8; stroke-width: 5; }
.trunk-case { stroke: #f3bc8c; stroke-width: 8; }
.trunk-fill { stroke: #ffcb90; stroke-width: 6; }
.zone { fill: rgba(239, 68, 68, .27); stroke: #991b1b; stroke-width: 11; stroke-linejoin: bevel; }
.dots { fill: #333; }
.places {
  font-family: "Noto Sans", sans-serif;
  font-size: 48px;
  text-anchor: middle;
  fill: #333;
  stroke: #fff;
  stroke-opacity: .8;
  stroke-width: 6;
  stroke-linejoin: round;
  paint-order: stroke;
}
.khmer { font-family: "Noto Sans Khmer", "Noto Sans", sans-serif; font-size: 46px; }

.map-controls {
  position: absolute;
  top: 13px;
  right: 13px;
  width: 56px;
  background: #fff;
  box-shadow: 0 0 0 3px rgba(0, 0, 0, .1);
}
.map-controls button { display: grid; place-items: center; width: 100%; height: 55px; }
.map-controls button + button { border-top: 1px solid #ddd; }
.map-controls svg { width: 36px; height: 36px; fill: #333; }
.map-controls .south { fill: #ccc; }
```
